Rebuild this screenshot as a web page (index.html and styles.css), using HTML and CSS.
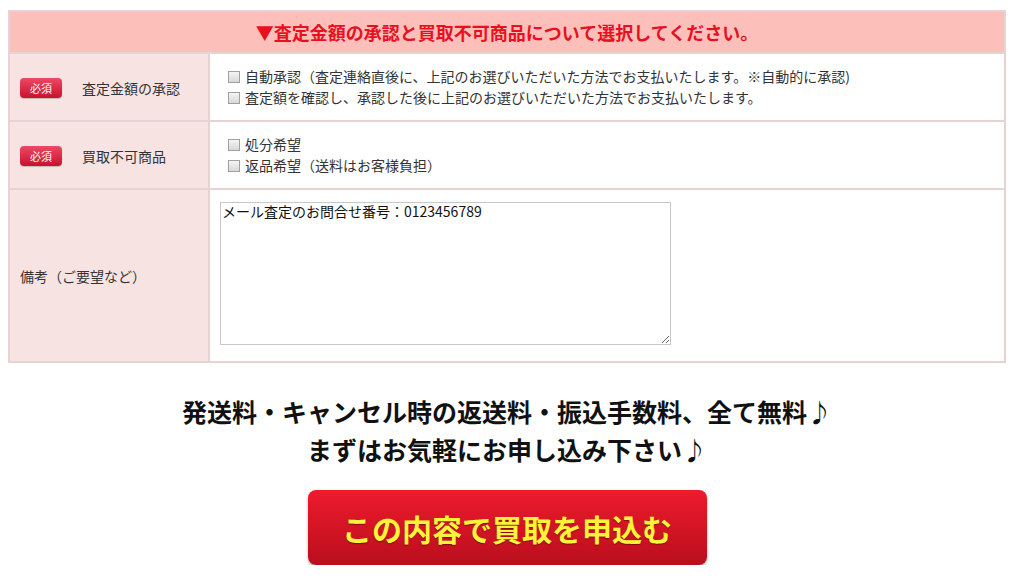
FILE: index.html
```html
<!DOCTYPE html>
<html lang="ja">
<head>
  <meta charset="UTF-8" />
  <title>買取申込</title>
  <link rel="stylesheet" href="styles.css">
</head>
<body>
  <table class="form-table">
    <colgroup>
      <col class="col-label">
      <col>
    </colgroup>
    <tr class="head-row">
      <th colspan="2">▼査定金額の承認と買取不可商品について選択してください。</th>
    </tr>
    <tr class="check-row">
      <th><span class="badge">必須</span><span class="label">査定金額の承認</span></th>
      <td>
        <label class="check"><input type="checkbox">自動承認（査定連絡直後に、上記のお選びいただいた方法でお支払いたします。※自動的に承認)</label>
        <label class="check"><input type="checkbox">査定額を確認し、承認した後に上記のお選びいただいた方法でお支払いたします。</label>
      </td>
    </tr>
    <tr class="check-row">
      <th><span class="badge">必須</span><span class="label">買取不可商品</span></th>
      <td>
        <label class="check"><input type="checkbox">処分希望</label>
        <label class="check"><input type="checkbox">返品希望（送料はお客様負担）</label>
      </td>
    </tr>
    <tr class="memo-row">
      <th><span class="plain">備考（ご要望など）</span></th>
      <td><textarea class="memo">メール査定のお問合せ番号：0123456789</textarea></td>
    </tr>
  </table>

  <p class="free-note">発送料・キャンセル時の返送料・振込手数料、全て無料♪<br>まずはお気軽にお申し込み下さい♪</p>

  <div class="submit-wrap">
    <button class="submit">この内容で買取を申込む</button>
  </div>
</body>
</html>
```

FILE: styles.css
```css
body {
  margin: 0;
  padding: 10px 0 0 8px;
  background: #fff;
  color: #333;
  font-family: "Noto Sans CJK JP", "Noto Sans", sans-serif;
  font-size: 14px;
}
.form-table {
  width: 998px;
  border-collapse: collapse;
  table-layout: fixed;
}
.col-label {
  width: 200px;
}
.form-table th,
.form-table td {
  border: 2px solid #e6d3d3;
  text-align: left;
  font-weight: normal;
  vertical-align: middle;
}
.head-row th {
  height: 40px;
  padding: 0;
  background: #fcbfb9;
  color: #e8101f;
  font-size: 18px;
  font-weight: bold;
  text-align: center;
}
.check-row th,
.memo-row th {
  background: #f8e3e3;
  padding: 0 10px;
}
.check-row th,
.check-row td {
  height: 66px;
}
.check-row td {
  padding: 0 10px 0 18px;
  background: #fff;
}
.badge {
  display: inline-block;
  width: 42px;
  height: 20px;
  line-height: 20px;
  margin-right: 20px;
  border-radius: 4px;
  background: linear-gradient(#ec4a63, #c9102f);
  color: #fff;
  font-size: 11px;
  text-align: center;
  vertical-align: middle;
  box-shadow: 0 1px 1px rgba(0,0,0,0.2);
}
.label {
  vertical-align: middle;
}
.check {
  display: block;
  line-height: 21px;
}
.check input {
  appearance: none;
  width: 12px;
  height: 12px;
  margin: 0 5px 0 0;
  border: 1px solid #a0a0a0;
  background: linear-gradient(#f4f4f4, #d8d8d8);
  vertical-align: -1px;
}
.memo-row td {
  padding: 12px 10px 16px 10px;
  background: #fff;
}
.memo {
  display: block;
  box-sizing: border-box;
  width: 451px;
  height: 143px;
  margin: 0;
  padding: 0 1px;
  border: 1px solid #c8c8c8;
  font-family: "Noto Sans CJK JP", sans-serif;
  font-size: 14px;
  line-height: 16px;
  color: #111;
  resize: both;
}
.free-note {
  width: 998px;
  margin: 29px 0 0 0;
  text-align: center;
  color: #111;
  font-size: 25px;
  font-weight: bold;
  line-height: 38px;
}
.submit-wrap {
  width: 998px;
  margin-top: 22px;
  text-align: center;
}
.submit {
  width: 399px;
  height: 75px;
  border: none;
  border-radius: 8px;
  background: linear-gradient(#ee1b2d, #b90e1d);
  color: #fff23a;
  font-family: "Noto Sans CJK JP", sans-serif;
  font-size: 30px;
  font-weight: bold;
  text-shadow: 0 1px 1px rgba(80,0,0,0.6);
  box-shadow: 0 2px 3px rgba(0,0,0,0.3);
  cursor: pointer;
}
```
